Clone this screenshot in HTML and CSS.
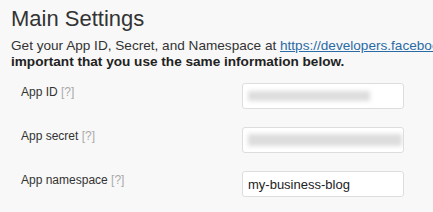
FILE: index.html
```html
<!DOCTYPE html>
<html>
<head>
<meta charset="utf-8">
<link rel="stylesheet" href="styles.css">
</head>
<body>
<div class="wrap">
  <h2 class="title">Main Settings</h2>
  <p class="intro">Get your App ID, Secret, and Namespace at <a href="#">https://developers.facebook.com/apps</a>. <strong>It is</strong><br><strong>important that you use the same information below.</strong></p>
  <div class="rows">
    <div class="row">
      <div class="label">App ID <span class="help">[?]</span></div>
      <div class="field"><span class="blur blur-1"></span></div>
    </div>
    <div class="row">
      <div class="label">App secret <span class="help">[?]</span></div>
      <div class="field"><span class="blur blur-2"></span></div>
    </div>
    <div class="row">
      <div class="label">App namespace <span class="help">[?]</span></div>
      <div class="field"><span class="value">my-business-blog</span></div>
    </div>
  </div>
</div>
</body>
</html>
```
FILE: styles.css
```css
html, body {
  margin: 0;
  padding: 0;
  background: #f8f8f8;
  overflow: hidden;
}
body {
  font-family: "Liberation Sans", Arial, Helvetica, sans-serif;
  color: #333;
}
.wrap {
  width: 800px;
  padding-left: 11px;
}
.title {
  margin: 0;
  padding-top: 5px;
  font-size: 22px;
  font-weight: normal;
  line-height: 28px;
  color: #333;
}
.intro {
  margin: 5px 0 0;
  font-size: 13.6px;
  line-height: 16px;
  color: #333;
}
.intro a {
  color: #2a6ba5;
  text-decoration: underline;
}
.intro strong {
  color: #222;
}
.rows {
  margin-top: 13px;
  display: flex;
  flex-direction: column;
  gap: 18px;
}
.row {
  display: flex;
  align-items: flex-start;
}
.label {
  width: 231px;
  padding-left: 10px;
  padding-top: 1px;
  font-size: 12px;
  line-height: 16px;
  color: #333;
  box-sizing: border-box;
}
.help {
  color: #aaa;
}
.field {
  width: 162px;
  height: 26px;
  box-sizing: border-box;
  background: #fff;
  border: 1px solid #ddd;
  border-radius: 3px;
  display: flex;
  align-items: center;
  padding-left: 5px;
  overflow: hidden;
}
.value {
  font-size: 13px;
  color: #222;
}
.blur {
  display: block;
  height: 10px;
  background: #ddd;
  filter: blur(2px);
}
.blur-1 {
  width: 122px;
}
.blur-2 {
  width: 154px;
  height: 12px;
}
```
